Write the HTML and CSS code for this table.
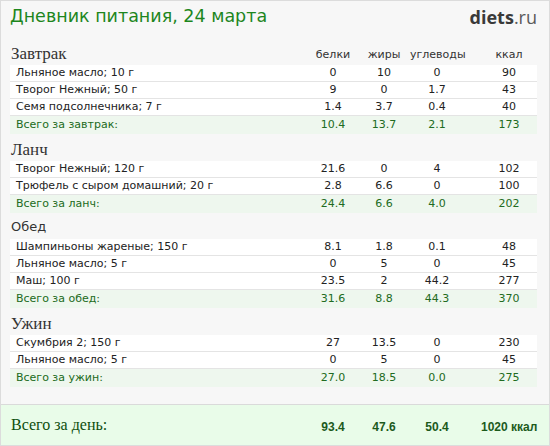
FILE: index.html
```html
<!DOCTYPE html>
<html lang="ru">
<head>
<meta charset="utf-8">
<title>Дневник питания</title>
<link rel="stylesheet" href="styles.css">
</head>
<body>
<div class="page">
  <header class="top">
    <h1 class="title">Дневник питания, 24 марта</h1>
    <div class="logo"><b>diets</b>.ru</div>
  </header>

  <section class="meal">
    <div class="head">
      <h2 class="meal-name serif">Завтрак</h2>
      <span class="lbl">белки</span><span class="lbl">жиры</span><span class="lbl">углеводы</span><span class="lbl kcal">ккал</span>
    </div>
    <div class="row"><span class="name">Льняное масло; 10 г</span><span>0</span><span>10</span><span>0</span><span class="kcal">90</span></div>
    <div class="row"><span class="name">Творог Нежный; 50 г</span><span>9</span><span>0</span><span>1.7</span><span class="kcal">43</span></div>
    <div class="row"><span class="name">Семя подсолнечника; 7 г</span><span>1.4</span><span>3.7</span><span>0.4</span><span class="kcal">40</span></div>
    <div class="row total"><span class="name">Всего за завтрак:</span><span>10.4</span><span>13.7</span><span>2.1</span><span class="kcal">173</span></div>
  </section>

  <section class="meal">
    <div class="head"><h2 class="meal-name serif">Ланч</h2></div>
    <div class="row"><span class="name">Творог Нежный; 120 г</span><span>21.6</span><span>0</span><span>4</span><span class="kcal">102</span></div>
    <div class="row"><span class="name">Трюфель с сыром домашний; 20 г</span><span>2.8</span><span>6.6</span><span>0</span><span class="kcal">100</span></div>
    <div class="row total"><span class="name">Всего за ланч:</span><span>24.4</span><span>6.6</span><span>4.0</span><span class="kcal">202</span></div>
  </section>

  <section class="meal">
    <div class="head head-short"><h2 class="meal-name sans">Обед</h2></div>
    <div class="row"><span class="name">Шампиньоны жареные; 150 г</span><span>8.1</span><span>1.8</span><span>0.1</span><span class="kcal">48</span></div>
    <div class="row"><span class="name">Льняное масло; 5 г</span><span>0</span><span>5</span><span>0</span><span class="kcal">45</span></div>
    <div class="row"><span class="name">Маш; 100 г</span><span>23.5</span><span>2</span><span>44.2</span><span class="kcal">277</span></div>
    <div class="row total"><span class="name">Всего за обед:</span><span>31.6</span><span>8.8</span><span>44.3</span><span class="kcal">370</span></div>
  </section>

  <section class="meal">
    <div class="head"><h2 class="meal-name serif">Ужин</h2></div>
    <div class="row"><span class="name">Скумбрия 2; 150 г</span><span>27</span><span>13.5</span><span>0</span><span class="kcal">230</span></div>
    <div class="row"><span class="name">Льняное масло; 5 г</span><span>0</span><span>5</span><span>0</span><span class="kcal">45</span></div>
    <div class="row total"><span class="name">Всего за ужин:</span><span>27.0</span><span>18.5</span><span>0.0</span><span class="kcal">275</span></div>
  </section>

  <footer class="day">
    <span class="day-name">Всего за день:</span><span>93.4</span><span>47.6</span><span>50.4</span><span class="kcal">1020 ккал</span>
  </footer>
</div>
</body>
</html>
```

FILE: styles.css
```css
html, body {
  margin: 0;
  padding: 0;
  background: #ffffff;
}

.page {
  width: 550px;
  height: 446px;
  box-sizing: border-box;
  border: 1px solid #dcdcdc;
  background: #f7f7f7;
  padding: 0 12px 0 9px;
  display: flex;
  flex-direction: column;
  font-family: "DejaVu Sans", Verdana, sans-serif;
  color: #222;
}

.top {
  height: 37px;
  box-sizing: border-box;
  padding-top: 5px;
  display: flex;
  justify-content: space-between;
  align-items: flex-start;
}

.title {
  margin: 0;
  font-weight: normal;
  font-size: 17.5px;
  line-height: 20px;
  color: #1d861d;
}

.logo {
  font-family: "Open Sans", "DejaVu Sans", sans-serif;
  font-size: 18px;
  line-height: 20px;
  color: #5a5a5a;
  padding-top: 1px;
}

.logo b {
  font-weight: 700;
  color: #3a3a3a;
}

.head,
.row,
.day {
  display: grid;
  grid-template-columns: 298px 50px 52px 54px 73px;
}

.head {
  height: 27px;
  align-items: end;
}

.head-short {
  height: 26px;
}

.meal-name {
  margin: 0;
  font-weight: normal;
  color: #333;
  line-height: 20px;
  padding: 0 0 1px 1px;
}

.meal-name.serif {
  font-family: "Liberation Serif", "Times New Roman", serif;
  font-size: 17px;
}

.meal-name.sans {
  font-family: "DejaVu Sans", sans-serif;
  font-size: 13px;
  padding-bottom: 2px;
}

.lbl {
  font-size: 11px;
  line-height: 14px;
  text-align: center;
  color: #333;
  padding-bottom: 3px;
}

.kcal {
  padding-left: 17px;
  white-space: nowrap;
}

.row {
  background: #ffffff;
  height: 16px;
  border-bottom: 1px solid #e4e4e4;
  font-size: 11px;
  line-height: 16px;
  text-align: center;
}

.row .name {
  text-align: left;
  padding-left: 6px;
  white-space: nowrap;
}

.row.total {
  background: #eef7ee;
  color: #216b21;
  height: 18px;
  line-height: 17px;
  border-bottom: 0;
}

.day {
  margin: auto -12px 0 -9px;
  padding: 0 12px 0 9px;
  border-top: 1px solid #dadada;
  background: #e9fce9;
  height: 40px;
  flex-shrink: 0;
  align-items: center;
  text-align: center;
  font-family: "Liberation Sans", Arial, sans-serif;
  font-weight: bold;
  font-size: 12px;
  line-height: 16px;
  color: #1c5a1c;
  white-space: nowrap;
}

.day span {
  padding-top: 3px;
}

.day .day-name {
  text-align: left;
  padding: 0 0 0 1px;
  font-family: "Liberation Serif", "Times New Roman", serif;
  font-weight: normal;
  font-size: 16px;
  line-height: 20px;
  color: #0e4f0e;
}

.day .kcal {
  padding-left: 17px;
}
```
